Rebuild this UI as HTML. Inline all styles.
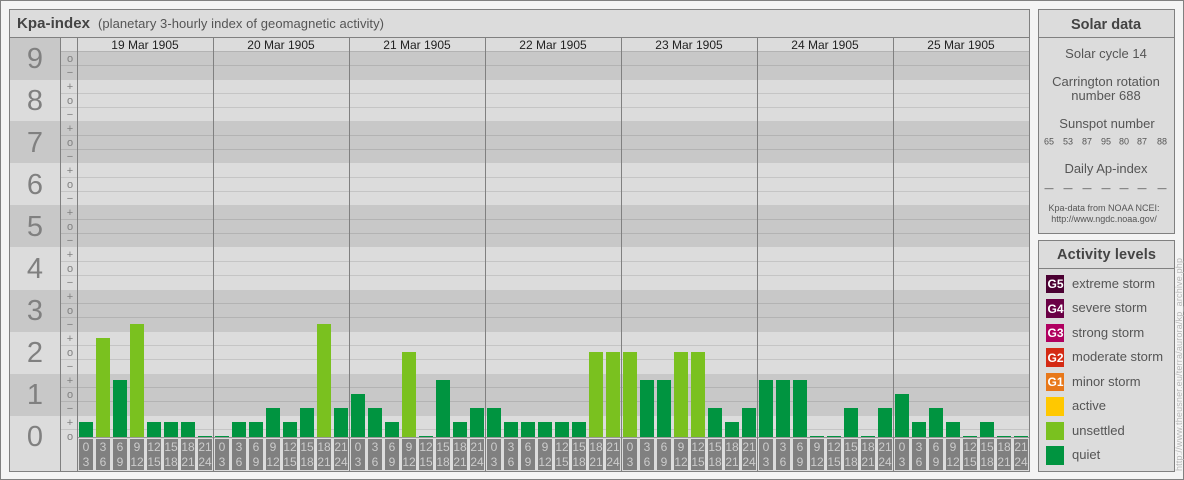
<!DOCTYPE html>
<html><head><meta charset="utf-8"><style>
html,body{margin:0;padding:0;background:#f4f4f4}
svg{display:block}
text{font-family:"Liberation Sans",sans-serif}
.t text{font-size:12px;fill:#ccc;text-anchor:middle}
.t rect{fill:#808080}
.s text{font-size:11px;fill:#808080;text-anchor:middle}
.l text{font-size:29px;fill:#808080;text-anchor:middle}
.d text{font-size:12px;fill:#222;text-anchor:middle}
.p text{font-size:13px;fill:#555;text-anchor:middle}
.n text{font-size:9px;fill:#555;text-anchor:middle}
.n .a{fill:#333}
.k text{font-size:13px;fill:#555}
.g text{font-size:12px;font-weight:bold;fill:#fff;text-anchor:middle}
.q{fill:#009440}.u{fill:#7ac11f}
</style></head><body>
<svg width="1184" height="480" viewBox="0 0 1184 480" xmlns="http://www.w3.org/2000/svg">
<rect x="0.5" y="0.5" width="1183" height="479" fill="#f4f4f4" stroke="#808080"/>
<g shape-rendering="crispEdges">
<rect x="9.5" y="9.5" width="1020" height="462" fill="#dcdcdc" stroke="#808080"/>
<g fill="#c8c8c8">
<rect x="10" y="38" width="1019" height="42"/>
<rect x="10" y="121" width="1019" height="42"/>
<rect x="10" y="205" width="1019" height="42"/>
<rect x="10" y="290" width="1019" height="42"/>
<rect x="10" y="374" width="1019" height="42"/>
</g>
<rect x="61" y="38" width="968" height="13" fill="#dcdcdc"/>
<rect x="10" y="437" width="1019" height="34" fill="#dcdcdc"/>
<g fill="#000" fill-opacity=".1">
<rect x="61" y="51" width="968" height="1"/><rect x="61" y="65" width="968" height="1"/>
<rect x="61" y="93" width="968" height="1"/><rect x="61" y="107" width="968" height="1"/>
<rect x="61" y="135" width="968" height="1"/><rect x="61" y="149" width="968" height="1"/>
<rect x="61" y="177" width="968" height="1"/><rect x="61" y="191" width="968" height="1"/>
<rect x="61" y="219" width="968" height="1"/><rect x="61" y="233" width="968" height="1"/>
<rect x="61" y="261" width="968" height="1"/><rect x="61" y="275" width="968" height="1"/>
<rect x="61" y="303" width="968" height="1"/><rect x="61" y="317" width="968" height="1"/>
<rect x="61" y="345" width="968" height="1"/><rect x="61" y="359" width="968" height="1"/>
<rect x="61" y="387" width="968" height="1"/><rect x="61" y="401" width="968" height="1"/>
<rect x="61" y="429" width="16" height="1"/><rect x="78" y="429" width="951" height="1"/>
</g>
<rect x="10" y="37" width="1019" height="1" fill="#808080"/>
<rect x="77" y="437" width="952" height="1" fill="#999"/>
<g fill="#808080">
<rect x="60" y="38" width="1" height="433"/>
<rect x="77" y="38" width="1" height="433"/>
<rect x="213" y="38" width="1" height="433"/>
<rect x="349" y="38" width="1" height="433"/>
<rect x="485" y="38" width="1" height="433"/>
<rect x="621" y="38" width="1" height="433"/>
<rect x="757" y="38" width="1" height="433"/>
<rect x="893" y="38" width="1" height="433"/>
</g>
<!-- bars -->
<rect class="q" x="79" y="422" width="14" height="15"/><rect class="u" x="96" y="338" width="14" height="99"/><rect class="q" x="113" y="380" width="14" height="57"/><rect class="u" x="130" y="324" width="14" height="113"/><rect class="q" x="147" y="422" width="14" height="15"/><rect class="q" x="164" y="422" width="14" height="15"/><rect class="q" x="181" y="422" width="14" height="15"/><rect class="q" x="198" y="436" width="14" height="1"/>
<rect class="q" x="215" y="436" width="14" height="1"/><rect class="q" x="232" y="422" width="14" height="15"/><rect class="q" x="249" y="422" width="14" height="15"/><rect class="q" x="266" y="408" width="14" height="29"/><rect class="q" x="283" y="422" width="14" height="15"/><rect class="q" x="300" y="408" width="14" height="29"/><rect class="u" x="317" y="324" width="14" height="113"/><rect class="q" x="334" y="408" width="14" height="29"/>
<rect class="q" x="351" y="394" width="14" height="43"/><rect class="q" x="368" y="408" width="14" height="29"/><rect class="q" x="385" y="422" width="14" height="15"/><rect class="u" x="402" y="352" width="14" height="85"/><rect class="q" x="419" y="436" width="14" height="1"/><rect class="q" x="436" y="380" width="14" height="57"/><rect class="q" x="453" y="422" width="14" height="15"/><rect class="q" x="470" y="408" width="14" height="29"/>
<rect class="q" x="487" y="408" width="14" height="29"/><rect class="q" x="504" y="422" width="14" height="15"/><rect class="q" x="521" y="422" width="14" height="15"/><rect class="q" x="538" y="422" width="14" height="15"/><rect class="q" x="555" y="422" width="14" height="15"/><rect class="q" x="572" y="422" width="14" height="15"/><rect class="u" x="589" y="352" width="14" height="85"/><rect class="u" x="606" y="352" width="14" height="85"/>
<rect class="u" x="623" y="352" width="14" height="85"/><rect class="q" x="640" y="380" width="14" height="57"/><rect class="q" x="657" y="380" width="14" height="57"/><rect class="u" x="674" y="352" width="14" height="85"/><rect class="u" x="691" y="352" width="14" height="85"/><rect class="q" x="708" y="408" width="14" height="29"/><rect class="q" x="725" y="422" width="14" height="15"/><rect class="q" x="742" y="408" width="14" height="29"/>
<rect class="q" x="759" y="380" width="14" height="57"/><rect class="q" x="776" y="380" width="14" height="57"/><rect class="q" x="793" y="380" width="14" height="57"/><rect class="q" x="810" y="436" width="14" height="1"/><rect class="q" x="827" y="436" width="14" height="1"/><rect class="q" x="844" y="408" width="14" height="29"/><rect class="q" x="861" y="436" width="14" height="1"/><rect class="q" x="878" y="408" width="14" height="29"/>
<rect class="q" x="895" y="394" width="14" height="43"/><rect class="q" x="912" y="422" width="14" height="15"/><rect class="q" x="929" y="408" width="14" height="29"/><rect class="q" x="946" y="422" width="14" height="15"/><rect class="q" x="963" y="436" width="14" height="1"/><rect class="q" x="980" y="422" width="14" height="15"/><rect class="q" x="997" y="436" width="14" height="1"/><rect class="q" x="1014" y="436" width="14" height="1"/>
<!-- side panels -->
<rect x="1038.5" y="9.5" width="136" height="224" fill="#dcdcdc" stroke="#808080"/>
<rect x="1039" y="37" width="135" height="1" fill="#808080"/>
<rect x="1038.5" y="240.5" width="136" height="231" fill="#dcdcdc" stroke="#808080"/>
<rect x="1039" y="268" width="135" height="1" fill="#808080"/>
<rect x="1046" y="275" width="18" height="18" fill="#4b0032"/>
<rect x="1046" y="299" width="18" height="19" fill="#6a0045"/>
<rect x="1046" y="324" width="18" height="18" fill="#b00060"/>
<rect x="1046" y="348" width="18" height="19" fill="#d42a14"/>
<rect x="1046" y="373" width="18" height="18" fill="#e8781a"/>
<rect x="1046" y="397" width="18" height="19" fill="#ffc800"/>
<rect x="1046" y="422" width="18" height="18" fill="#7ac11f"/>
<rect x="1046" y="446" width="18" height="19" fill="#009440"/>
</g>
<text x="17" y="28" font-size="15" font-weight="bold" fill="#444" textLength="73">Kpa-index</text>
<text x="98" y="28" font-size="13" fill="#555" textLength="286">(planetary 3-hourly index of geomagnetic activity)</text>
<g class="l">
<text x="35" y="68">9</text><text x="35" y="110">8</text><text x="35" y="152">7</text><text x="35" y="194">6</text><text x="35" y="236">5</text><text x="35" y="278">4</text><text x="35" y="320">3</text><text x="35" y="362">2</text><text x="35" y="404">1</text><text x="35" y="446">0</text>
</g>
<g class="s">
<text x="70" y="62">o</text><text x="70" y="76">−</text><text x="70" y="90">+</text>
<text x="70" y="104">o</text><text x="70" y="118">−</text><text x="70" y="132">+</text>
<text x="70" y="146">o</text><text x="70" y="160">−</text><text x="70" y="174">+</text>
<text x="70" y="188">o</text><text x="70" y="202">−</text><text x="70" y="216">+</text>
<text x="70" y="230">o</text><text x="70" y="244">−</text><text x="70" y="258">+</text>
<text x="70" y="272">o</text><text x="70" y="286">−</text><text x="70" y="300">+</text>
<text x="70" y="314">o</text><text x="70" y="328">−</text><text x="70" y="342">+</text>
<text x="70" y="356">o</text><text x="70" y="370">−</text><text x="70" y="384">+</text>
<text x="70" y="398">o</text><text x="70" y="412">−</text><text x="70" y="426">+</text>
<text x="70" y="440">o</text>
</g>
<g class="d">
<text x="145" y="49">19 Mar 1905</text><text x="281" y="49">20 Mar 1905</text><text x="417" y="49">21 Mar 1905</text><text x="553" y="49">22 Mar 1905</text><text x="689" y="49">23 Mar 1905</text><text x="825" y="49">24 Mar 1905</text><text x="961" y="49">25 Mar 1905</text>
</g>
<g class="t">
<g><rect x="79" y="439" width="14" height="31"/><rect x="96" y="439" width="14" height="31"/><rect x="113" y="439" width="14" height="31"/><rect x="130" y="439" width="14" height="31"/><rect x="147" y="439" width="14" height="31"/><rect x="164" y="439" width="14" height="31"/><rect x="181" y="439" width="14" height="31"/><rect x="198" y="439" width="14" height="31"/>
<text x="86" y="451">0</text><text x="86" y="466">3</text><text x="103" y="451">3</text><text x="103" y="466">6</text><text x="120" y="451">6</text><text x="120" y="466">9</text><text x="137" y="451">9</text><text x="137" y="466">12</text><text x="154" y="451">12</text><text x="154" y="466">15</text><text x="171" y="451">15</text><text x="171" y="466">18</text><text x="188" y="451">18</text><text x="188" y="466">21</text><text x="205" y="451">21</text><text x="205" y="466">24</text></g>
<g transform="translate(136 0)"><rect x="79" y="439" width="14" height="31"/><rect x="96" y="439" width="14" height="31"/><rect x="113" y="439" width="14" height="31"/><rect x="130" y="439" width="14" height="31"/><rect x="147" y="439" width="14" height="31"/><rect x="164" y="439" width="14" height="31"/><rect x="181" y="439" width="14" height="31"/><rect x="198" y="439" width="14" height="31"/>
<text x="86" y="451">0</text><text x="86" y="466">3</text><text x="103" y="451">3</text><text x="103" y="466">6</text><text x="120" y="451">6</text><text x="120" y="466">9</text><text x="137" y="451">9</text><text x="137" y="466">12</text><text x="154" y="451">12</text><text x="154" y="466">15</text><text x="171" y="451">15</text><text x="171" y="466">18</text><text x="188" y="451">18</text><text x="188" y="466">21</text><text x="205" y="451">21</text><text x="205" y="466">24</text></g>
<g transform="translate(272 0)"><rect x="79" y="439" width="14" height="31"/><rect x="96" y="439" width="14" height="31"/><rect x="113" y="439" width="14" height="31"/><rect x="130" y="439" width="14" height="31"/><rect x="147" y="439" width="14" height="31"/><rect x="164" y="439" width="14" height="31"/><rect x="181" y="439" width="14" height="31"/><rect x="198" y="439" width="14" height="31"/>
<text x="86" y="451">0</text><text x="86" y="466">3</text><text x="103" y="451">3</text><text x="103" y="466">6</text><text x="120" y="451">6</text><text x="120" y="466">9</text><text x="137" y="451">9</text><text x="137" y="466">12</text><text x="154" y="451">12</text><text x="154" y="466">15</text><text x="171" y="451">15</text><text x="171" y="466">18</text><text x="188" y="451">18</text><text x="188" y="466">21</text><text x="205" y="451">21</text><text x="205" y="466">24</text></g>
<g transform="translate(408 0)"><rect x="79" y="439" width="14" height="31"/><rect x="96" y="439" width="14" height="31"/><rect x="113" y="439" width="14" height="31"/><rect x="130" y="439" width="14" height="31"/><rect x="147" y="439" width="14" height="31"/><rect x="164" y="439" width="14" height="31"/><rect x="181" y="439" width="14" height="31"/><rect x="198" y="439" width="14" height="31"/>
<text x="86" y="451">0</text><text x="86" y="466">3</text><text x="103" y="451">3</text><text x="103" y="466">6</text><text x="120" y="451">6</text><text x="120" y="466">9</text><text x="137" y="451">9</text><text x="137" y="466">12</text><text x="154" y="451">12</text><text x="154" y="466">15</text><text x="171" y="451">15</text><text x="171" y="466">18</text><text x="188" y="451">18</text><text x="188" y="466">21</text><text x="205" y="451">21</text><text x="205" y="466">24</text></g>
<g transform="translate(544 0)"><rect x="79" y="439" width="14" height="31"/><rect x="96" y="439" width="14" height="31"/><rect x="113" y="439" width="14" height="31"/><rect x="130" y="439" width="14" height="31"/><rect x="147" y="439" width="14" height="31"/><rect x="164" y="439" width="14" height="31"/><rect x="181" y="439" width="14" height="31"/><rect x="198" y="439" width="14" height="31"/>
<text x="86" y="451">0</text><text x="86" y="466">3</text><text x="103" y="451">3</text><text x="103" y="466">6</text><text x="120" y="451">6</text><text x="120" y="466">9</text><text x="137" y="451">9</text><text x="137" y="466">12</text><text x="154" y="451">12</text><text x="154" y="466">15</text><text x="171" y="451">15</text><text x="171" y="466">18</text><text x="188" y="451">18</text><text x="188" y="466">21</text><text x="205" y="451">21</text><text x="205" y="466">24</text></g>
<g transform="translate(680 0)"><rect x="79" y="439" width="14" height="31"/><rect x="96" y="439" width="14" height="31"/><rect x="113" y="439" width="14" height="31"/><rect x="130" y="439" width="14" height="31"/><rect x="147" y="439" width="14" height="31"/><rect x="164" y="439" width="14" height="31"/><rect x="181" y="439" width="14" height="31"/><rect x="198" y="439" width="14" height="31"/>
<text x="86" y="451">0</text><text x="86" y="466">3</text><text x="103" y="451">3</text><text x="103" y="466">6</text><text x="120" y="451">6</text><text x="120" y="466">9</text><text x="137" y="451">9</text><text x="137" y="466">12</text><text x="154" y="451">12</text><text x="154" y="466">15</text><text x="171" y="451">15</text><text x="171" y="466">18</text><text x="188" y="451">18</text><text x="188" y="466">21</text><text x="205" y="451">21</text><text x="205" y="466">24</text></g>
<g transform="translate(816 0)"><rect x="79" y="439" width="14" height="31"/><rect x="96" y="439" width="14" height="31"/><rect x="113" y="439" width="14" height="31"/><rect x="130" y="439" width="14" height="31"/><rect x="147" y="439" width="14" height="31"/><rect x="164" y="439" width="14" height="31"/><rect x="181" y="439" width="14" height="31"/><rect x="198" y="439" width="14" height="31"/>
<text x="86" y="451">0</text><text x="86" y="466">3</text><text x="103" y="451">3</text><text x="103" y="466">6</text><text x="120" y="451">6</text><text x="120" y="466">9</text><text x="137" y="451">9</text><text x="137" y="466">12</text><text x="154" y="451">12</text><text x="154" y="466">15</text><text x="171" y="451">15</text><text x="171" y="466">18</text><text x="188" y="451">18</text><text x="188" y="466">21</text><text x="205" y="451">21</text><text x="205" y="466">24</text></g>
</g>
<text x="1106" y="29" font-size="14.5" font-weight="bold" fill="#444" text-anchor="middle">Solar data</text>
<g class="p">
<text x="1106" y="58">Solar cycle 14</text>
<text x="1106" y="86">Carrington rotation</text>
<text x="1106" y="100">number 688</text>
<text x="1107" y="128">Sunspot number</text>
<text x="1106" y="173">Daily Ap-index</text>
</g>
<g class="n">
<text x="1049" y="144.5">65</text><text x="1068" y="144.5">53</text><text x="1087" y="144.5">87</text><text x="1106" y="144.5">95</text><text x="1124" y="144.5">80</text><text x="1142" y="144.5">87</text><text x="1162" y="144.5">88</text>
<text class="a" x="1049" y="191">—</text><text class="a" x="1068" y="191">—</text><text class="a" x="1087" y="191">—</text><text class="a" x="1106" y="191">—</text><text class="a" x="1124" y="191">—</text><text class="a" x="1142" y="191">—</text><text class="a" x="1162" y="191">—</text>
<text x="1104" y="211">Kpa-data from NOAA NCEI:</text>
<text x="1104" y="222">http://www.ngdc.noaa.gov/</text>
</g>
<text x="1106.5" y="259" font-size="14.5" font-weight="bold" fill="#444" text-anchor="middle" textLength="99">Activity levels</text>
<g class="g">
<text x="1055.5" y="288">G5</text><text x="1055.5" y="313">G4</text><text x="1055.5" y="337">G3</text><text x="1055.5" y="362">G2</text><text x="1055.5" y="386">G1</text>
</g>
<g class="k">
<text x="1072" y="288">extreme storm</text>
<text x="1072" y="312">severe storm</text>
<text x="1072" y="337">strong storm</text>
<text x="1072" y="361">moderate storm</text>
<text x="1072" y="386">minor storm</text>
<text x="1072" y="410">active</text>
<text x="1072" y="435">unsettled</text>
<text x="1072" y="459">quiet</text>
</g>
<text transform="translate(1182 471) rotate(-90)" font-size="9" fill="#b8b8b8" textLength="213">http://www.theusner.eu/terra/aurora/kp_archive.php</text>
</svg>
</body></html>
